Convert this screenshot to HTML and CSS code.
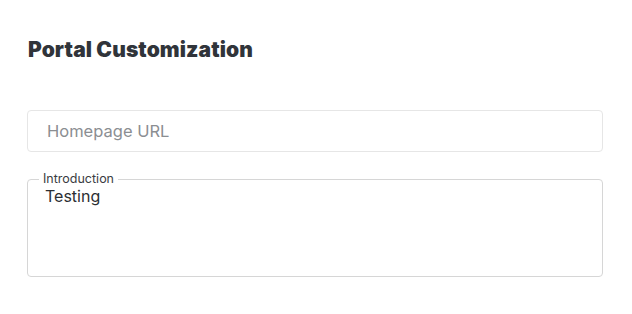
FILE: index.html
```html
<!DOCTYPE html>
<html lang="en">
<head>
<meta charset="utf-8">
<title>Portal Customization</title>
<link rel="stylesheet" href="styles.css">
</head>
<body>
<main class="page">
  <h1 class="title">Portal Customization</h1>
  <form class="form">
    <input class="url-input" type="text" placeholder="Homepage URL">
    <fieldset class="intro">
      <legend class="intro-label">Introduction</legend>
      <textarea class="intro-text">Testing</textarea>
    </fieldset>
  </form>
</main>
</body>
</html>
```

FILE: styles.css
```css
html, body {
  margin: 0;
  padding: 0;
  background: #ffffff;
}

body {
  font-family: "Inter", "Open Sans", sans-serif;
  color: #2b2e33;
}

.page {
  padding: 35px 29px 0 27px;
}

.title {
  margin: 0 0 0 1px;
  font-family: "Inter", sans-serif;
  font-weight: 900;
  font-size: 21px;
  line-height: 30px;
  color: #30343a;
  letter-spacing: 0.1px;
}

.form {
  display: flex;
  flex-direction: column;
  margin-top: 45px;
  gap: 20px;
}

.url-input {
  box-sizing: border-box;
  width: 100%;
  height: 42px;
  margin: 0;
  padding: 0 19px;
  border: 1px solid #e6e6e6;
  border-radius: 4px;
  font-family: "Inter", sans-serif;
  font-size: 16.5px;
  color: #2b2e33;
  outline: none;
}

.url-input::placeholder {
  color: #8b8e92;
}

.intro {
  box-sizing: border-box;
  margin: 0;
  padding: 0 15px 0 11px;
  height: 105px;
  border: 1px solid #d6d6d6;
  border-radius: 4px;
  display: flex;
}

.intro-label {
  margin: 0;
  padding: 0 4px;
  font-family: "Inter", sans-serif;
  font-size: 12.5px;
  line-height: 14px;
  color: #3a3d42;
}

.intro-text {
  flex: 1;
  margin: 0;
  padding: 0 0 0 6px;
  border: none;
  outline: none;
  resize: none;
  font-family: "Inter", sans-serif;
  font-size: 16px;
  line-height: 20px;
  color: #2b2e33;
  background: transparent;
}
```
